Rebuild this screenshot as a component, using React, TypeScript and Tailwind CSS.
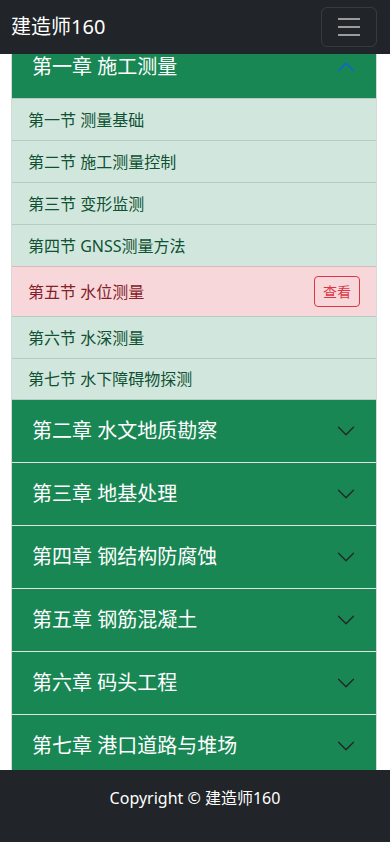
import React from 'react';

const sections = [
  '第一节 测量基础',
  '第二节 施工测量控制',
  '第三节 变形监测',
  '第四节 GNSS测量方法',
  '第五节 水位测量',
  '第六节 水深测量',
  '第七节 水下障碍物探测',
];

const chapters = [
  '第二章 水文地质勘察',
  '第三章 地基处理',
  '第四章 钢结构防腐蚀',
  '第五章 钢筋混凝土',
  '第六章 码头工程',
  '第七章 港口道路与堆场',
];

const Chevron: React.FC<{ up?: boolean }> = ({ up }) => (
  <svg
    viewBox="0 0 16 16"
    className={`w-5 h-5 shrink-0 ${up ? 'rotate-180 text-[#0c63e4]' : 'text-[#212529]'}`}
    fill="currentColor"
  >
    <path
      fillRule="evenodd"
      d="M1.646 4.646a.5.5 0 0 1 .708 0L8 10.293l5.646-5.647a.5.5 0 0 1 .708.708l-6 6a.5.5 0 0 1-.708 0l-6-6a.5.5 0 0 1 0-.708z"
    />
  </svg>
);

export default function App() {
  return (
    <div
      className="min-h-[842px] bg-white"
      style={{ fontFamily: '"Noto Sans", "Noto Sans CJK SC", sans-serif' }}
    >
      {/* fixed navbar */}
      <nav className="fixed top-0 left-0 right-0 z-10 h-[54px] bg-[#212529] flex items-center justify-between pl-[11px] pr-[13px]">
        <span className="text-white text-[20px] leading-[30px]">建造师160</span>
        <button className="w-[56px] h-[40px] rounded-md border border-white/10 flex items-center justify-center">
          <svg viewBox="0 0 30 30" className="w-[30px] h-[30px]">
            <path
              d="M4 7h22M4 15h22M4 23h22"
              stroke="rgba(255,255,255,0.55)"
              strokeWidth="2"
              strokeLinecap="butt"
            />
          </svg>
        </button>
      </nav>

      <main className="pt-[35px] pb-[72px]">
        <div className="ml-[11px] w-[366px] border-x border-[#d3d9d6]">
          {/* chapter 1 expanded */}
          <div className="h-[63px] bg-[#198754] flex items-center justify-between pl-5 pr-5">
            <span className="text-white text-[20px] leading-[30px]">第一章 施工测量</span>
            <Chevron up />
          </div>
          <div>
            {sections.map((s, i) => {
              const active = i === 4;
              const last = i === sections.length - 1;
              if (active) {
                return (
                  <div
                    key={s}
                    className="h-[50px] border-t border-[#d7b9bd] bg-[#f8d7da] flex items-center justify-between pl-4 pr-4"
                  >
                    <span className="text-[#842029] text-[16px] leading-6">{s}</span>
                    <button className="h-[31px] px-2 rounded border border-[#dc3545] text-[#dc3545] text-[14px] leading-5">
                      查看
                    </button>
                  </div>
                );
              }
              return (
                <div
                  key={s}
                  className={`h-[42px] border-t border-[#b6cbc1] bg-[#d1e7dd] flex items-center pl-4 ${last ? 'border-b' : ''}`}
                >
                  <span className="text-[#0f5132] text-[16px] leading-6">{s}</span>
                </div>
              );
            })}
          </div>

          {chapters.map((c, i) => (
            <div
              key={c}
              className={`bg-[#198754] flex items-center justify-between px-5 ${i === 0 ? 'h-[62px]' : 'h-[63px] border-t border-[#dee2e6]'}`}
            >
              <span className="text-white text-[20px] leading-[30px]">{c}</span>
              <Chevron />
            </div>
          ))}
        </div>
      </main>

      <footer className="fixed bottom-0 left-0 right-0 z-10 h-[72px] bg-[#212529] flex justify-center pt-4">
        <span className="text-white text-[16px] leading-6">Copyright © 建造师160</span>
      </footer>
    </div>
  );
}
